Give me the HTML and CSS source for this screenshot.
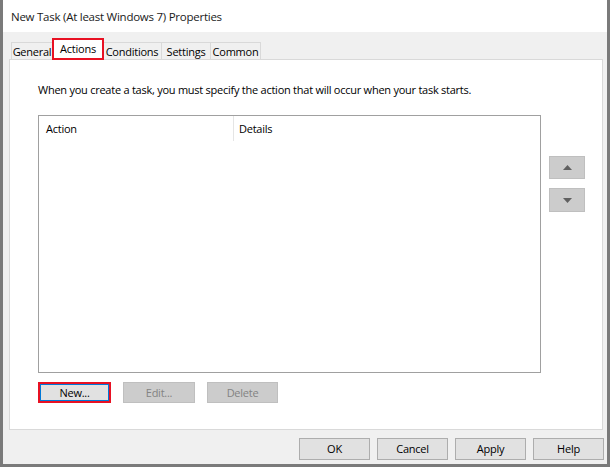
FILE: index.html
```html
<!DOCTYPE html>
<html lang="en">
<head>
    <meta charset="UTF-8">
    <title>New Task (At least Windows 7) Properties</title>
    <link rel="stylesheet" href="styles.css">
</head>
<body>
    <div class="window">
        <div class="titlebar">New Task (At least Windows 7) Properties</div>
        <div class="content">
            <div class="tabs">
                <div class="tab tab-general">General</div>
                <div class="tab tab-actions selected">Actions</div>
                <div class="tab tab-conditions">Conditions</div>
                <div class="tab tab-settings">Settings</div>
                <div class="tab tab-common">Common</div>
            </div>
            <div class="panel">
                <div class="desc">When you create a task, you must specify the action that will occur when your task starts.</div>
                <div class="list-row">
                    <div class="list">
                        <div class="list-header">
                            <div class="col col-action">Action</div>
                            <div class="col col-details">Details</div>
                        </div>
                    </div>
                    <div class="side-buttons">
                        <div class="arrow-btn">
                            <svg width="9" height="5" viewBox="0 0 9 5"><path d="M0 5 L4.5 0 L9 5 Z" fill="#606060"/></svg>
                        </div>
                        <div class="arrow-btn down">
                            <svg width="9" height="5" viewBox="0 0 9 5"><path d="M0 0 L9 0 L4.5 5 Z" fill="#606060"/></svg>
                        </div>
                    </div>
                </div>
                <div class="action-buttons">
                    <div class="btn btn-new">New...</div>
                    <div class="btn disabled btn-edit">Edit...</div>
                    <div class="btn disabled btn-delete">Delete</div>
                </div>
            </div>
        </div>
        <div class="footer">
            <div class="btn footer-btn">OK</div>
            <div class="btn footer-btn">Cancel</div>
            <div class="btn footer-btn">Apply</div>
            <div class="btn footer-btn">Help</div>
        </div>
    </div>
</body>
</html>
```

FILE: styles.css
```css
body {
    margin: 0;
    font-family: "Open Sans", "Noto Sans", sans-serif;
    font-size: 11px;
    letter-spacing: -0.25px;
    color: #000;
    background-color: #fff;
}
.window {
    width: 610px;
    height: 467px;
    box-sizing: border-box;
    border: 3px solid #7a7a7a;
    border-top: 0;
    background-color: #f0f0f0;
    display: flex;
    flex-direction: column;
}
.titlebar {
    height: 32px;
    line-height: 34px;
    padding-left: 8px;
    font-size: 11.5px;
    background-color: #fff;
    color: #1a1a1a;
}
.content {
    padding: 0 4px 0 6px;
}
.tabs {
    height: 27px;
    display: flex;
    align-items: flex-end;
    padding-left: 2px;
}
.tab {
    height: 17px;
    line-height: 17px;
    box-sizing: border-box;
    border: 1px solid #d9d9d9;
    border-bottom: 0;
    border-left: 0;
    text-align: center;
    background-color: #f0f0f0;
}
.tab-general {
    width: 42px;
    border-left: 1px solid #d9d9d9;
}
.tab-actions { width: 50px; }
.tab-conditions { width: 59px; }
.tab-settings { width: 49px; }
.tab-common { width: 50px; }
.tab.selected {
    height: 22px;
    line-height: 18px;
    margin-bottom: -1px;
    margin-left: -1px;
    margin-right: -1px;
    width: 52px;
    border: 2px solid #e81123;
    background-color: #fff;
    position: relative;
    z-index: 1;
}
.panel {
    height: 371px;
    box-sizing: border-box;
    border: 1px solid #d9d9d9;
    background-color: #fff;
    padding: 22px 0 0 28px;
}
.desc {
    line-height: 16px;
    height: 16px;
}
.list-row {
    display: flex;
    margin-top: 17px;
}
.list {
    width: 503px;
    height: 258px;
    box-sizing: border-box;
    border: 1px solid #a0a0a0;
}
.list-header {
    display: flex;
    height: 25px;
}
.col {
    line-height: 25px;
}
.col-action {
    width: 187px;
    padding-left: 7px;
    border-right: 1px solid #e5e5e5;
}
.col-details {
    padding-left: 5px;
}
.side-buttons {
    margin-left: 8px;
    margin-top: 41px;
    display: flex;
    flex-direction: column;
    gap: 9px;
}
.arrow-btn {
    width: 36px;
    height: 23px;
    box-sizing: border-box;
    border: 1px solid #bfbfbf;
    background-color: #cccccc;
    display: flex;
    align-items: center;
    justify-content: center;
}
.arrow-btn.down {
    height: 24px;
}
.action-buttons {
    display: flex;
    margin-top: 9px;
}
.btn {
    height: 21px;
    box-sizing: border-box;
    border: 1px solid #adadad;
    background-color: #e1e1e1;
    text-align: center;
    line-height: 19px;
}
.btn-new {
    width: 73px;
    border: 2px solid #e81123;
    box-shadow: inset 0 0 0 1px #0078d7;
    line-height: 17px;
}
.btn.disabled {
    border-color: #bfbfbf;
    background-color: #cccccc;
    color: #838383;
}
.btn-edit {
    width: 72px;
    margin-left: 12px;
}
.btn-delete {
    width: 71px;
    margin-left: 12px;
}
.footer {
    flex: 1;
    display: flex;
    justify-content: flex-end;
    gap: 7px;
    padding: 8px 3px 0 0;
}
.footer-btn {
    width: 71px;
    height: 22px;
    line-height: 20px;
}
```
